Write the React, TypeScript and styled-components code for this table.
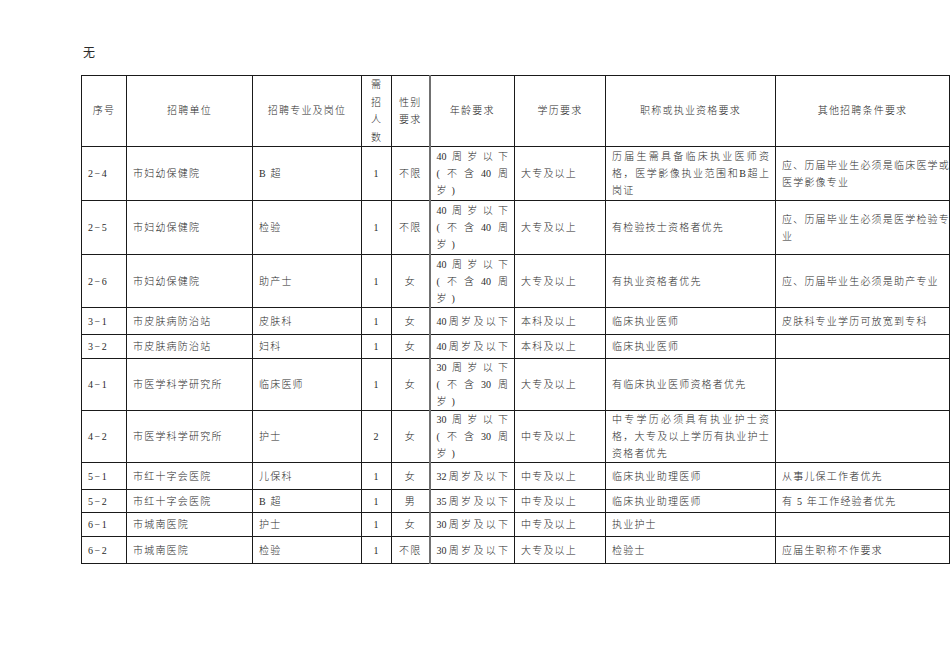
import React from "react";
import styled, { createGlobalStyle } from "styled-components";

const GlobalStyle = createGlobalStyle`
  html, body {
    margin: 0;
    padding: 0;
    background: #ffffff;
  }
  body {
    font-family: "Liberation Serif", "Noto Sans CJK SC", serif;
    color: #2a2a2a;
    overflow: hidden;
  }
`;

const Page = styled.div`
  width: 950px;
  height: 672px;
  box-sizing: border-box;
  padding: 44px 0 0 81px;
`;

const Title = styled.div`
  font-size: 12px;
  line-height: 18px;
  margin: 0 0 13px 2px;
`;

const Sheet = styled.table`
  border-collapse: collapse;
  table-layout: fixed;
  width: 868px;
  font-size: 10px;
  font-weight: 300;
  line-height: 17px;
  letter-spacing: 1.2px;
`;

const Row = styled.tr<{ $h: number }>`
  height: ${(p) => p.$h}px;
`;

const HeadCell = styled.th<{ $heavy?: boolean }>`
  border: 1px solid #1a1a1a;
  border-left: ${(p) => (p.$heavy ? "2px solid #707070" : "1px solid #1a1a1a")};
  padding: 0 4px;
  font-weight: 300;
  line-height: 17.5px;
  text-align: center;
  vertical-align: middle;
  white-space: nowrap;
`;

const Cell = styled.td<{ $center?: boolean; $heavy?: boolean }>`
  border: 1px solid #1a1a1a;
  border-left: ${(p) => (p.$heavy ? "2px solid #707070" : "1px solid #1a1a1a")};
  padding: 0 6px;
  text-align: ${(p) => (p.$center ? "center" : "left")};
  vertical-align: middle;
  white-space: nowrap;
  overflow: visible;
`;

const Serial = styled(Cell)`
  letter-spacing: 1.6px;
`;

const Spread = styled.div`
  display: flex;
  justify-content: space-between;
  letter-spacing: 0;
`;

const Plain = styled.div`
  white-space: nowrap;
`;

type Line = { t: string; j?: boolean };
type Content = Line[];

const j = (t: string): Line => ({ t, j: true });
const p = (t: string): Line => ({ t });

function Lines({ lines }: { lines: Content }) {
  return (
    <>
      {lines.map((l, i) =>
        l.j ? (
          <Spread key={i}>
            {(l.t.match(/[0-9A-Za-z]+|./gu) ?? []).map((s, k) => (
              <span key={k}>{s}</span>
            ))}
          </Spread>
        ) : (
          <Plain key={i}>{l.t}</Plain>
        )
      )}
    </>
  );
}

type Job = {
  no: string;
  unit: string;
  post: string;
  count: string;
  sex: string;
  age: Content;
  edu: string;
  title: Content;
  other: Content;
  h: number;
};

const age40: Content = [j("40周岁以下"), j("(不含40周"), p("岁 )")];
const age30: Content = [j("30周岁以下"), j("(不含30周"), p("岁 )")];

const jobs: Job[] = [
  {
    no: "2−4", unit: "市妇幼保健院", post: "B 超", count: "1", sex: "不限", age: age40, edu: "大专及以上",
    title: [j("历届生需具备临床执业医师资"), j("格，医学影像执业范围和B超上"), p("岗证")],
    other: [p("应、历届毕业生必须是临床医学或"), p("医学影像专业")], h: 54,
  },
  {
    no: "2−5", unit: "市妇幼保健院", post: "检验", count: "1", sex: "不限", age: age40, edu: "大专及以上",
    title: [p("有检验技士资格者优先")],
    other: [p("应、历届毕业生必须是医学检验专"), p("业")], h: 54,
  },
  {
    no: "2−6", unit: "市妇幼保健院", post: "助产士", count: "1", sex: "女", age: age40, edu: "大专及以上",
    title: [p("有执业资格者优先")],
    other: [p("应、历届毕业生必须是助产专业")], h: 53,
  },
  {
    no: "3−1", unit: "市皮肤病防治站", post: "皮肤科", count: "1", sex: "女", age: [j("40周岁及以下")], edu: "本科及以上",
    title: [p("临床执业医师")], other: [p("皮肤科专业学历可放宽到专科")], h: 27,
  },
  {
    no: "3−2", unit: "市皮肤病防治站", post: "妇科", count: "1", sex: "女", age: [j("40周岁及以下")], edu: "本科及以上",
    title: [p("临床执业医师")], other: [], h: 24,
  },
  {
    no: "4−1", unit: "市医学科学研究所", post: "临床医师", count: "1", sex: "女", age: age30, edu: "大专及以上",
    title: [p("有临床执业医师资格者优先")], other: [], h: 52,
  },
  {
    no: "4−2", unit: "市医学科学研究所", post: "护士", count: "2", sex: "女", age: age30, edu: "中专及以上",
    title: [j("中专学历必须具有执业护士资"), j("格，大专及以上学历有执业护士"), p("资格者优先")],
    other: [], h: 52,
  },
  {
    no: "5−1", unit: "市红十字会医院", post: "儿保科", count: "1", sex: "女", age: [j("32周岁及以下")], edu: "中专及以上",
    title: [p("临床执业助理医师")], other: [p("从事儿保工作者优先")], h: 27,
  },
  {
    no: "5−2", unit: "市红十字会医院", post: "B 超", count: "1", sex: "男", age: [j("35周岁及以下")], edu: "中专及以上",
    title: [p("临床执业助理医师")], other: [p("有 5 年工作经验者优先")], h: 23,
  },
  {
    no: "6−1", unit: "市城南医院", post: "护士", count: "1", sex: "女", age: [j("30周岁及以下")], edu: "中专及以上",
    title: [p("执业护士")], other: [], h: 24,
  },
  {
    no: "6−2", unit: "市城南医院", post: "检验", count: "1", sex: "不限", age: [j("30周岁及以下")], edu: "大专及以上",
    title: [p("检验士")], other: [p("应届生职称不作要求")], h: 27,
  },
];

const widths = [45, 126, 109, 30, 38, 85, 91, 170, 174];

export default function App() {
  return (
    <Page>
      <GlobalStyle />
      <Title>无</Title>
      <Sheet>
        <colgroup>
          {widths.map((w, i) => (
            <col key={i} width={w} />
          ))}
        </colgroup>
        <thead>
          <Row $h={71}>
            <HeadCell>序号</HeadCell>
            <HeadCell>招聘单位</HeadCell>
            <HeadCell>招聘专业及岗位</HeadCell>
            <HeadCell>
              <Lines lines={[p("需"), p("招"), p("人"), p("数")]} />
            </HeadCell>
            <HeadCell>
              <Lines lines={[p("性别"), p("要求")]} />
            </HeadCell>
            <HeadCell $heavy>年龄要求</HeadCell>
            <HeadCell>学历要求</HeadCell>
            <HeadCell>职称或执业资格要求</HeadCell>
            <HeadCell>其他招聘条件要求</HeadCell>
          </Row>
        </thead>
        <tbody>
          {jobs.map((r) => (
            <Row key={r.no} $h={r.h}>
              <Serial>{r.no}</Serial>
              <Cell>{r.unit}</Cell>
              <Cell>{r.post}</Cell>
              <Cell $center>{r.count}</Cell>
              <Cell $center>{r.sex}</Cell>
              <Cell $heavy>
                <Lines lines={r.age} />
              </Cell>
              <Cell>{r.edu}</Cell>
              <Cell>
                <Lines lines={r.title} />
              </Cell>
              <Cell>
                <Lines lines={r.other} />
              </Cell>
            </Row>
          ))}
        </tbody>
      </Sheet>
    </Page>
  );
}
